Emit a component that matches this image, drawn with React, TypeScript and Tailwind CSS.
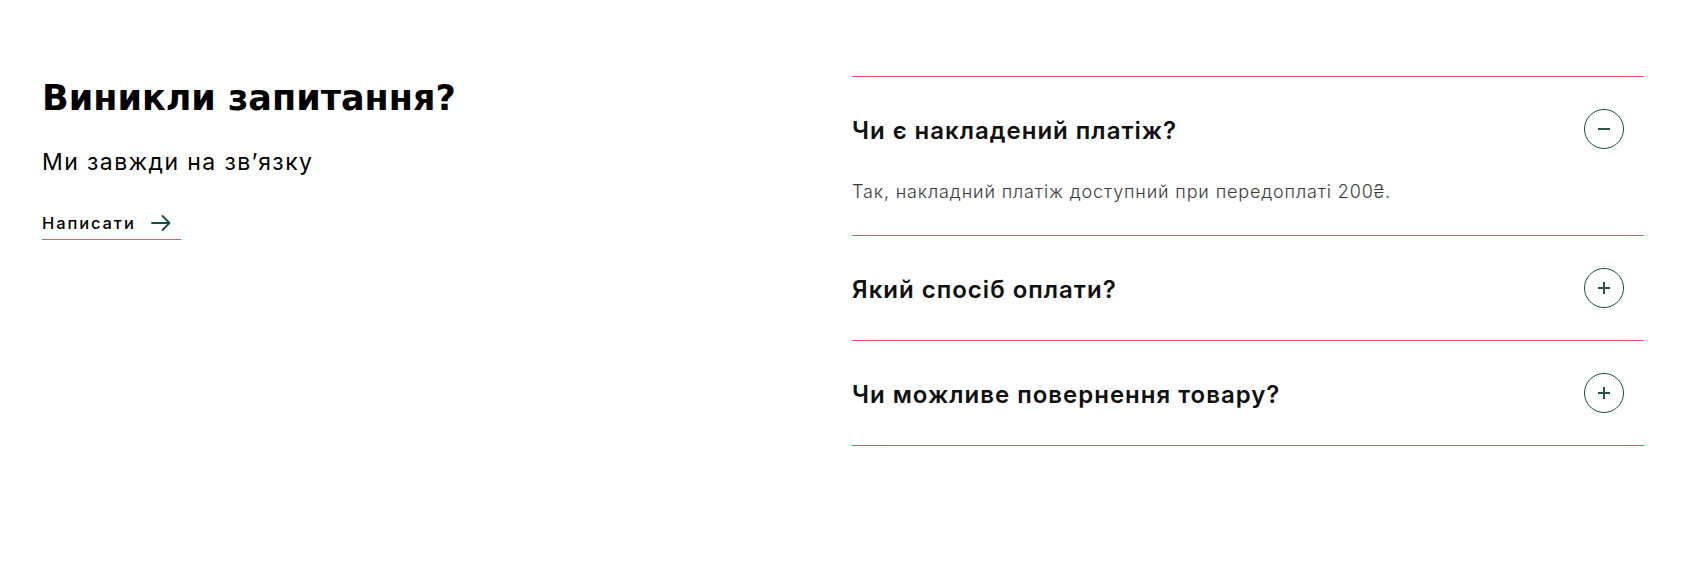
import React, { useState } from "react";

const items = [
  {
    q: "Чи є накладений платіж?",
    a: "Так, накладний платіж доступний при передоплаті 200₴.",
  },
  { q: "Який спосіб оплати?", a: "Оплата карткою або при отриманні." },
  { q: "Чи можливе повернення товару?", a: "Так, протягом 14 днів." },
];

function CircleIcon({ open }: { open: boolean }) {
  return (
    <span className="flex h-10 w-10 shrink-0 items-center justify-center rounded-full border border-[#174e48]">
      <svg width="14" height="14" viewBox="0 0 14 14" fill="none">
        <path d="M1 7h12" stroke="#23564f" strokeWidth="2" />
        {!open && <path d="M7 1v12" stroke="#23564f" strokeWidth="2" />}
      </svg>
    </span>
  );
}

export default function App() {
  const [open, setOpen] = useState(0);
  return (
    <div className="min-h-[562px] bg-white pl-[42px] pr-[39px] pt-[76px] font-['Inter','Noto_Sans',sans-serif]">
      <div className="grid grid-cols-2 gap-[18px]">
        <div>
          <h2 className="font-['DejaVu_Sans','Inter',sans-serif] text-[35px] font-bold leading-[44px] text-black">
            Виникли запитання?
          </h2>
          <p className="mt-[27px] text-[23px] font-normal leading-[30px] tracking-[1.4px] text-black">
            Ми завжди на зв’язку
          </p>
          <a
            href="#"
            className="mt-[36px] inline-flex items-center gap-[15px] border-b border-[#ff4d68] pb-[6px] pr-[10px] text-[16.5px] font-medium leading-[20px] tracking-[1.9px] text-black"
          >
            Написати
            <svg width="20" height="18" viewBox="0 0 20 18" fill="none">
              <path
                d="M1 9h17.5M11.5 2l7 7-7 7"
                stroke="#174e48"
                strokeWidth="1.8"
                strokeLinecap="round"
                strokeLinejoin="round"
              />
            </svg>
          </a>
        </div>
        <div className="border-t border-[#ff4d68]">
          {items.map((it, i) => (
            <div key={i} className="border-b border-[#ff4d68]">
              <button
                onClick={() => setOpen(open === i ? -1 : i)}
                className="flex w-full items-center justify-between py-8 pr-5 text-left"
              >
                <span className="pt-[3px] text-[24px] font-semibold leading-[36px] tracking-[1px] text-[#111]">
                  {it.q}
                </span>
                <CircleIcon open={open === i} />
              </button>
              {open === i && (
                <p className="pb-8 text-[18px] font-light leading-[22px] tracking-[0.85px] text-[#3a3a3a]">
                  {it.a}
                </p>
              )}
            </div>
          ))}
        </div>
      </div>
    </div>
  );
}
